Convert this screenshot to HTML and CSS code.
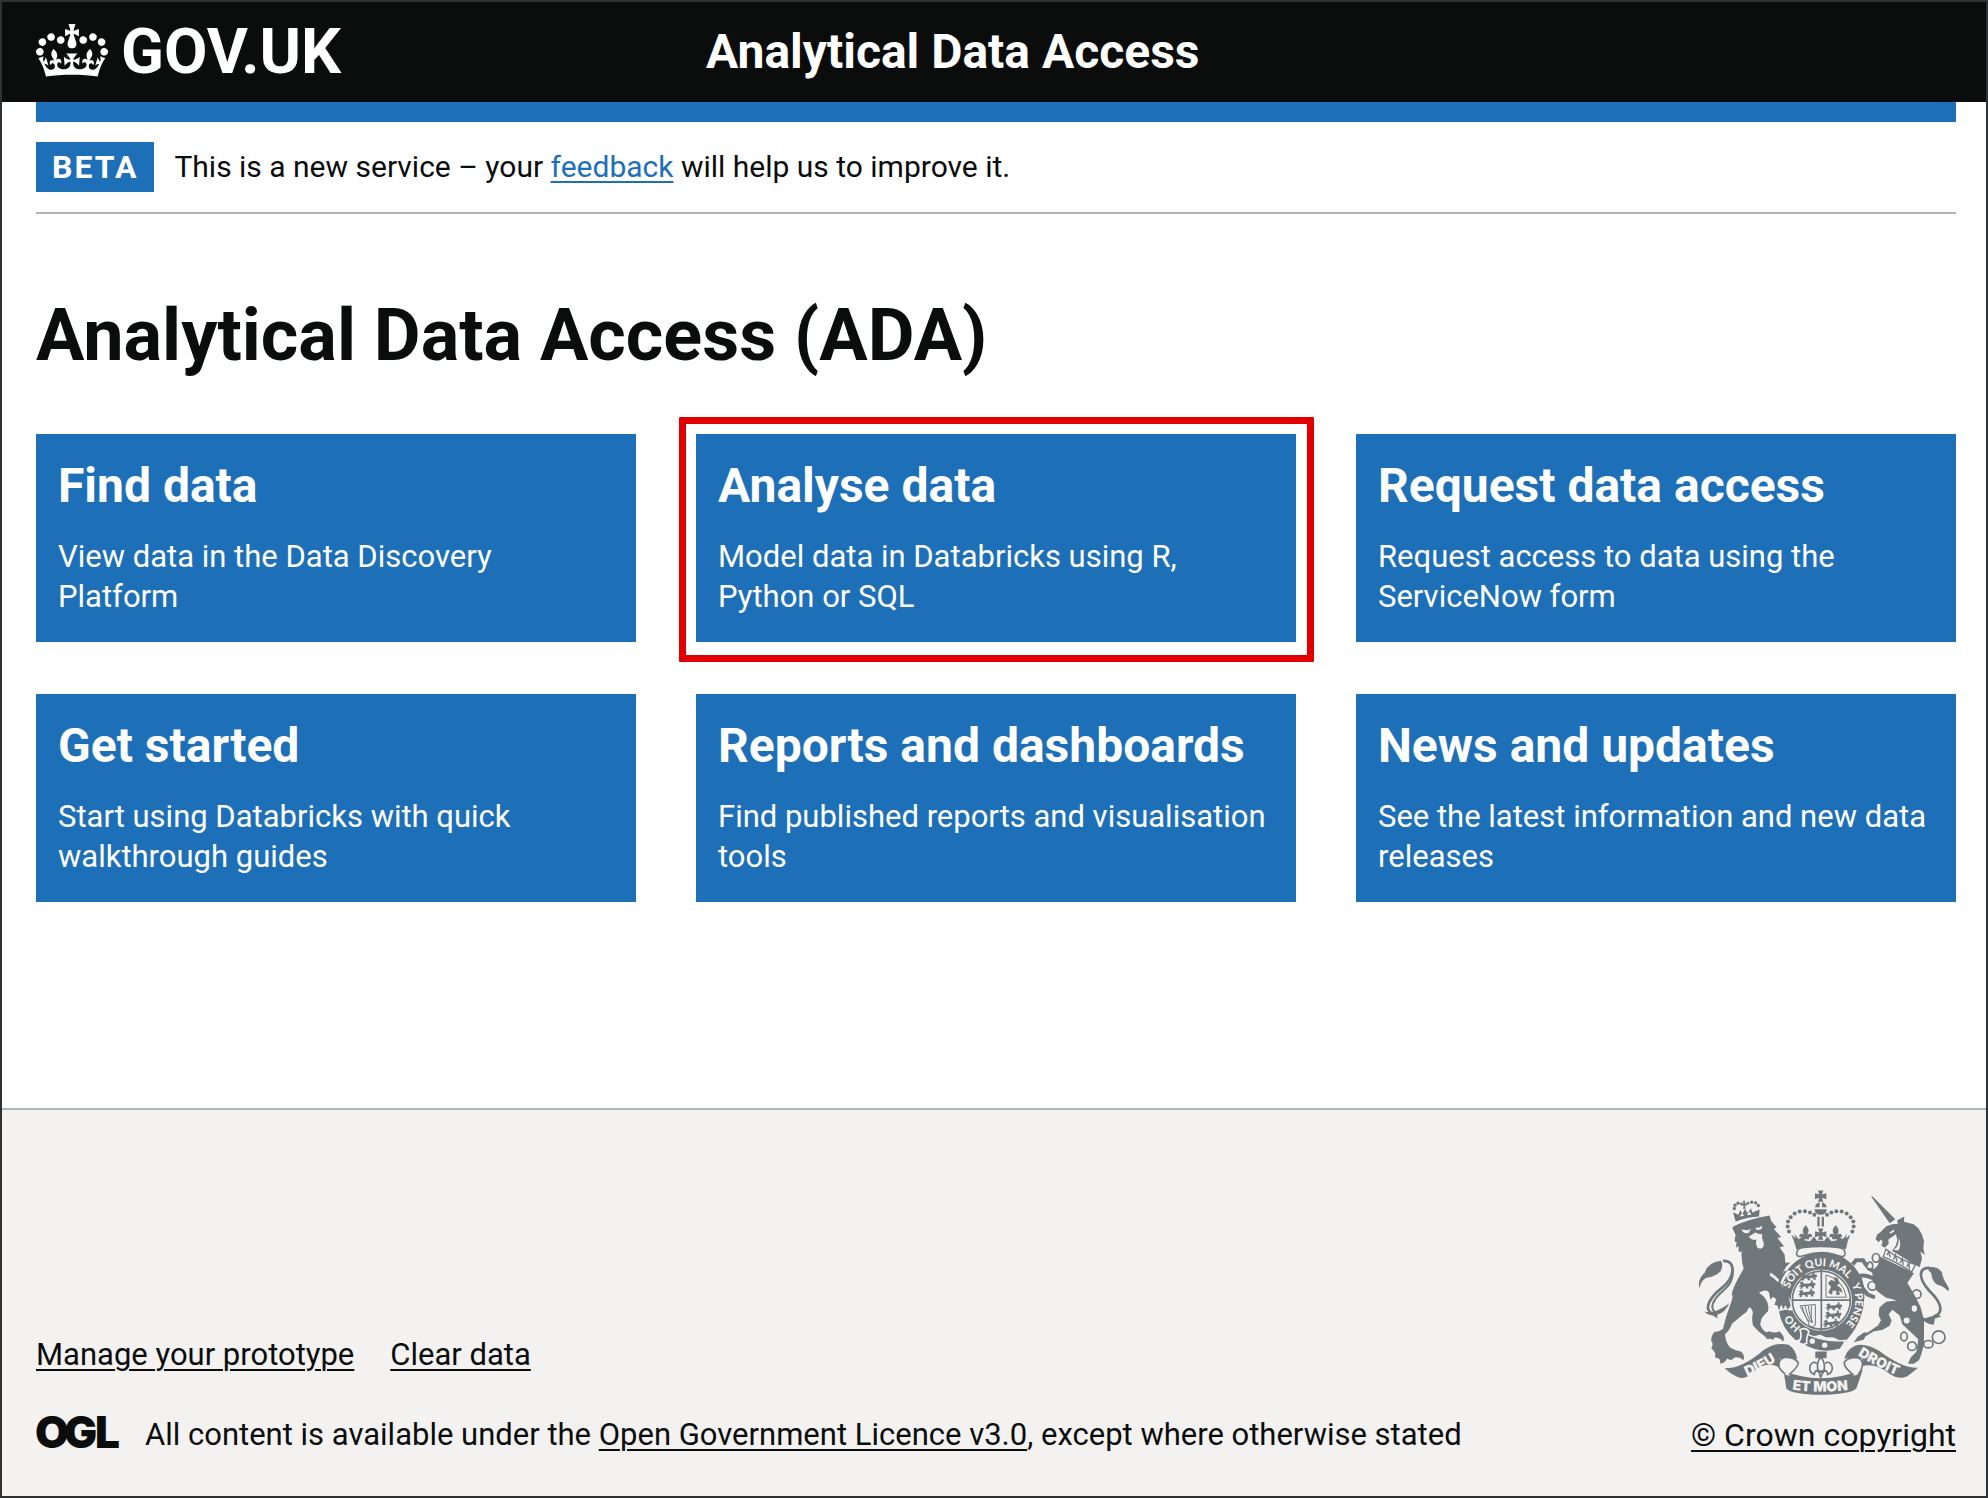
FILE: index.html
```html
<!DOCTYPE html>
<html lang="en">
<head>
<meta charset="utf-8">
<meta name="viewport" content="width=device-width, initial-scale=1">
<title>Analytical Data Access</title>
<link rel="stylesheet" href="styles.css">
</head>
<body>
<header class="header">
  <a class="logo" href="#" aria-label="GOV.UK">
    <svg class="logo-crown" viewBox="0 0 132 97" aria-hidden="true"><path fill="currentColor" fill-rule="evenodd" d="M25 30.2c3.5 1.5 7.7-.2 9.1-3.7 1.5-3.6-.2-7.8-3.9-9.2-3.6-1.4-7.6.3-9.1 3.9-1.4 3.5.3 7.5 3.9 9zM9 39.5c3.6 1.5 7.8-.2 9.2-3.7 1.5-3.6-.2-7.8-3.9-9.1-3.6-1.5-7.6.2-9.1 3.8-1.4 3.5.3 7.5 3.8 9zM4.4 57.2c3.5 1.5 7.7-.2 9.1-3.8 1.5-3.6-.2-7.7-3.9-9.1-3.5-1.5-7.6.3-9.1 3.8-1.4 3.5.3 7.6 3.9 9.1zm38.3-21.4c3.5 1.5 7.7-.2 9.1-3.8 1.5-3.6-.2-7.7-3.9-9.1-3.6-1.5-7.6.3-9.1 3.8-1.3 3.6.4 7.7 3.9 9.1zm64.4-5.6c-3.6 1.5-7.8-.2-9.1-3.7-1.5-3.6.2-7.8 3.8-9.2 3.6-1.4 7.7.3 9.2 3.9 1.3 3.5-.4 7.5-3.9 9zm15.9 9.3c-3.6 1.5-7.7-.2-9.1-3.7-1.5-3.6.2-7.8 3.7-9.1 3.6-1.5 7.7.2 9.2 3.8 1.5 3.5-.3 7.5-3.8 9zm4.7 17.7c-3.6 1.5-7.8-.2-9.2-3.8-1.5-3.6.2-7.7 3.9-9.1 3.6-1.5 7.7.3 9.2 3.8 1.3 3.5-.4 7.6-3.9 9.1zM89.3 35.8c-3.6 1.5-7.8-.2-9.2-3.8-1.4-3.6.2-7.7 3.9-9.1 3.6-1.5 7.7.3 9.2 3.8 1.4 3.6-.3 7.7-3.9 9.1zM69.7 17.7l8.9 4.7V9.3l-8.9 2.8c-.2-.3-.5-.6-.9-.9L72.4 0H59.6l3.5 11.2c-.3.3-.6.5-.9.9l-8.8-2.8v13.1l8.8-4.7c.3.3.6.7.9.9l-5 15.4v.1c-.2.8-.4 1.6-.4 2.4 0 4.1 3.1 7.5 7 8.1h.2c.3 0 .7.1 1 .1.4 0 .7 0 1-.1h.2c4-.6 7.1-4.1 7.1-8.1 0-.8-.1-1.7-.4-2.4V34l-5.1-15.4c.4-.2.7-.6 1-.9zM66 92.8c16.9 0 32.8 1.1 47.1 3.2 4-16.9 8.9-26.7 14-33.5l-9.6-3.4c1 4.9 1.1 7.2 0 10.2-1.5-1.4-3-4.3-4.2-8.7L108.6 76c2.8-2 5-3.2 7.5-3.3-4.4 9.4-10 11.9-13.6 11.2-4.3-.8-6.3-4.6-5.6-7.9 1-4.7 5.7-5.9 8-.5 4.3-8.7-3-11.4-7.6-8.8 7.1-7.2 7.9-13.5 2.1-21.1-8 6.1-8.1 12.3-4.5 20.8-4.7-5.4-12.1-2.5-9.5 6.2 3.4-5.2 7.9-2 7.2 3.1-.6 4.3-6.4 7.8-13.5 7.2-10.3-.9-10.9-8-11.2-13.8 2.5-.5 7.1 1.8 11 7.3L80.2 60c-4.1 4.4-8 5.3-12.3 5.4 1.4-4.4 8-11.6 8-11.6H55.5s6.4 7.2 7.9 11.6c-4.2-.1-8-1-12.3-5.4l1.4 16.4c3.9-5.5 8.5-7.7 10.9-7.3-.3 5.8-.9 12.8-11.1 13.8-7.2.6-12.9-2.9-13.5-7.2-.7-5 3.8-8.3 7.1-3.1 2.7-8.7-4.6-11.6-9.4-6.2 3.7-8.5 3.6-14.7-4.6-20.8-5.8 7.6-5 13.9 2.2 21.1-4.7-2.6-11.9.1-7.7 8.8 2.3-5.5 7.1-4.2 8.1.5.7 3.3-1.3 7.1-5.7 7.9-3.5.7-9-1.8-13.5-11.2 2.5.1 4.7 1.3 7.5 3.3l-4.7-15.4c-1.2 4.4-2.7 7.2-4.3 8.7-1.1-3-.9-5.3 0-10.2l-9.5 3.4c5 6.9 9.9 16.7 14 33.5 14.8-2.1 30.8-3.2 47.7-3.2z"/></svg>
    <span class="logo-text">GOV.UK</span>
  </a>
  <a class="service-name" href="#">Analytical Data Access</a>
</header>

<div class="container">
  <div class="brand-bar"></div>
  <div class="phase-banner">
    <strong class="tag">BETA</strong>
    <p class="phase-text">This is a new service – your <a class="link" href="#">feedback</a> will help us to improve it.</p>
  </div>
  <main class="main">
    <h1 class="title">Analytical Data Access (ADA)</h1>
    <div class="cards">
      <a class="card" href="#"><h2 class="card-title">Find data</h2><p class="card-text">View data in the Data Discovery Platform</p></a>
      <a class="card card-highlighted" href="#"><h2 class="card-title">Analyse data</h2><p class="card-text">Model data in Databricks using R, Python or SQL</p></a>
      <a class="card" href="#"><h2 class="card-title">Request data access</h2><p class="card-text">Request access to data using the ServiceNow form</p></a>
      <a class="card" href="#"><h2 class="card-title">Get started</h2><p class="card-text">Start using Databricks with quick walkthrough guides</p></a>
      <a class="card" href="#"><h2 class="card-title">Reports and dashboards</h2><p class="card-text">Find published reports and visualisation tools</p></a>
      <a class="card" href="#"><h2 class="card-title">News and updates</h2><p class="card-text">See the latest information and new data releases</p></a>
    </div>
  </main>
</div>

<footer class="footer">
  <div class="footer-meta">
    <nav class="footer-links">
      <a href="#">Manage your prototype</a>
      <a href="#">Clear data</a>
    </nav>
    <div class="licence">
      <svg class="ogl" viewBox="0 0 82 34" role="img" aria-label="OGL"><text class="ogl-text" x="-1 28 59" y="33">OGL</text></svg>
      <p class="licence-text">All content is available under the <a href="#">Open Government Licence v3.0</a>, except where otherwise stated</p>
    </div>
  </div>
  <a class="copyright" href="#">
    <svg class="crest" viewBox="60 58 750 614" aria-hidden="true">
      <defs>
        <path id="garter" d="M331 354A102 102 0 0 1 522 350"/>
        <path id="garter-right" d="M518 342A102 102 0 0 1 470 480"/>
        <path id="garter-left" d="M366 469A102 102 0 0 1 325 388"/>
        <path id="motto-left" d="M205 617Q257 595 310 558"/>
        <path id="motto-right" d="M536 553Q590 587 668 620"/>
        <path id="motto-mid" d="M340 657Q427 668 522 656"/>
        <path id="patee" d="M-8 -17H8L4 -5 17 -9V9L4 5 8 17H-8L-4 5-17 9V-9L-4-5Z"/>
        <path id="fleur" d="M0-22C12-10 10-2 4 8 12 0 22 4 18 16 14 9 10 14 10 20H-10C-10 14-14 9-18 16-22 4-12 0-4 8-10-2-12-10 0-22Z"/>
        <path id="beast" d="M-27 5L-20-3-25-7-15-11-11-4 4-5 11-9 9-14 15-14 16-6 21-8 24-1 18 3 20 9 13 9 11 3 1 4 3 10-4 10-7 4-14 5-17 11-23 11-20 5Z"/>
      </defs>

      <!-- lion -->
      <g class="ink">
        <path d="M160 172 164 166Q215 143 272 134L276 150 293 170 284 174 307 199 295 201 315 226 302 229 317 252 319 276 334 275Q318 288 312 306L304 332 327 369 335 405 326 417 319 402 314 415 306 401 300 420 296 405 286 402 292 386 283 378 274 386 270 365Q262 352 240 366 274 388 267 421 243 440 244 463 258 491 270 481 290 489 301 481 321 499 312 512 303 499 285 500 287 510 272 503 264 509 258 497 237 483 222 464 217 442 222 424 212 397 204 422 177 443 159 459 151 481 138 490 140 514 153 530 172 541 187 543 199 556 193 568 182 556 166 560 157 573 145 563 134 580 123 578 127 562 108 560 112 543 97 533 105 518 96 508 98 490 108 482 118 485 132 474 140 438 152 407 165 374 158 370 163 345 194 294 186 269 188 240 177 253 179 225 168 239 173 213 163 218 170 192Z"/>
        <path d="M61 352Q55 325 77 306 88 274 125 270 135 280 125 301 109 317 83 321 66 328 61 352ZM76 422Q104 432 151 397 139 424 115 432L115 443 102 434Q85 432 76 422Z"/>
        <path d="M170 152 162 124 178 132 184 117 190 130 198 114 206 127 216 112 220 125 242 116 240 137Q205 138 170 152Z"/>
        <circle cx="166" cy="113" r="5"/><circle cx="168" cy="103" r="5"/><circle cx="177" cy="97" r="5"/><circle cx="187" cy="99" r="4"/><circle cx="207" cy="97" r="4"/><circle cx="218" cy="94" r="5"/><circle cx="230" cy="96" r="5"/><circle cx="238" cy="104" r="5"/>
        <path d="M191 90H199L197 98 204 97V105L198 103 200 114H192L194 104 187 105V97L194 98Z"/>
      </g>
      <g class="line">
        <path stroke-width="8" d="M104 430C65 415 101 373 128 352 170 318 172 268 132 270"/>
        <path stroke-width="6" d="M114 429C84 411 108 380 134 358 158 339 167 310 158 288"/>
      </g>
      <g class="paper">
        <path d="M187 176 207 178 216 173 208 187Q194 190 187 176ZM229 171 241 170 250 164 247 175 234 178ZM209 198Q220 190 229 185 239 191 250 190L249 202Q257 218 253 228 247 237 235 231 229 219 232 206 220 211 209 198Z"/>
        <path d="M275 305Q304 324 331 364L326 367Q299 331 272 313ZM182 137 189 127 196 135ZM203 133 211 123 218 131Z"/>
      </g>

      <!-- crown -->
      <g class="ink">
        <use href="#patee" x="425" y="76"/>
        <path d="M408 109A18 18 0 0 1 422 94V109ZM429 94A18 18 0 0 1 443 109H429ZM406 115H444Q441 132 425 132 409 132 406 115ZM415 138H422V167H415ZM428 138H435V167H428Z"/>
        <use href="#patee" x="425" y="190"/>
        <use href="#fleur" x="380" y="185"/><use href="#fleur" x="470" y="185"/>
        <path d="M337 191 350 203 346 189 359 205 370 197 378 209 393 211 405 197 414 210H436L445 197 457 211 472 209 480 197 491 205 504 189 500 203 514 191Q504 213 501 235 425 214 352 235 346 211 337 191Z"/>
        <circle cx="406" cy="132" r="6"/><circle cx="393" cy="125" r="6"/><circle cx="378" cy="121" r="6"/><circle cx="362" cy="122" r="6"/><circle cx="347" cy="128" r="6"/><circle cx="335" cy="139" r="6"/><circle cx="327" cy="152" r="6"/><circle cx="326" cy="167" r="6"/><circle cx="330" cy="182" r="6"/>
        <circle cx="444" cy="132" r="6"/><circle cx="457" cy="125" r="6"/><circle cx="472" cy="121" r="6"/><circle cx="488" cy="122" r="6"/><circle cx="503" cy="128" r="6"/><circle cx="515" cy="139" r="6"/><circle cx="523" cy="152" r="6"/><circle cx="524" cy="167" r="6"/><circle cx="520" cy="182" r="6"/>
      </g>

      <!-- garter and shield -->
      <path class="ink" d="M318 300Q301 318 296 340L308 344Q318 318 338 300ZM427 243A128 128 0 0 1 555 390Q550 460 496 515L440 488 350 508Q307 470 300 421L319 417 340 420 335 388 304 335Q340 252 427 243Z"/>
      <circle class="paper" cx="427" cy="388" r="92"/>
      <circle class="line" cx="427" cy="388" r="87" stroke-width="5"/>
      <g class="line" stroke-width="5">
        <path d="M427 294V482M340 388H514"/>
        <path stroke-width="3" d="M441 312V379H502Q494 328 441 312ZM363 405 409 401V463Q390 477 388 453L363 405M370 407Q376 438 391 452M379 406Q384 437 397 455M388 405Q391 437 402 456M397 404V455"/>
      </g>
      <g class="ink">
        <use href="#beast" x="391" y="318"/><use href="#beast" x="386" y="343"/><use href="#beast" x="384" y="368"/>
        <use href="#beast" x="466" y="408"/><use href="#beast" x="464" y="433"/><use href="#beast" x="458" y="458"/>
        <path d="M448 366 456 348 447 338 456 327 468 332 463 320 475 320 482 337 474 343 486 352 491 366 479 360 483 371 472 373 472 360 461 360 459 372Z"/>
      </g>
      <path class="line" stroke-width="5" d="M353 250Q351 232 375 230 425 223 476 230 500 232 498 250 496 261 478 255 425 237 373 255 355 261 353 250Z"/>
      <g>
        <path class="ink crest-gap" d="M365 480Q426 515 500 509L484 535Q425 554 366 518Z"/>
        <path class="paper-line" stroke-width="5" d="M363 477Q382 468 390 483 382 497 383 517 367 526 359 513 371 500 363 477Z"/>
        <circle class="paper" cx="400" cy="511" r="8"/><circle class="paper" cx="437" cy="523" r="8"/>
        <path class="ink" d="M413 486H450L480 500 440 499Z"/>
      </g>

      <!-- unicorn -->
      <g class="ink">
        <path d="M576 76 580 76 649 145 632 157ZM657 159 654 149 676 137 675 153 704 160 718 172 729 191 735 211 733 232 737 252 724 242 729 262 722 289 702 278 639 240 650 225 655 208 651 190 628 206 629 219 618 231 607 225 611 212 605 206 599 214 590 205 594 192 604 184 622 166 640 160Z"/>
        <path d="M604 258 705 307 685 336 705 370 724 407 735 447 735 520 727 550 720 568 704 579 687 579 695 560 712 543 718 505 693 482 670 460 662 434 640 417 629 430 638 449 632 465 611 477 583 482 559 497 554 507 524 514 536 498 555 485 566 485 597 464 606 448 599 433 601 411 621 393 653 389 620 380 593 360 581 330 580 300 596 284Z"/>
        <path d="M750 289Q777 286 789 305 789 320 810 352L808 361Q792 345 774 341 758 330 757 307 744 298 750 289ZM713 427Q724 444 752 442L771 429 787 437 768 443 764 462Q738 461 713 427Z"/>
      </g>
      <g class="line">
        <path stroke-width="12" d="M596 307Q566 296 552 268L531 268 521 281M591 326Q559 310 541 315L549 350 566 371 588 380M532 313 523 337"/>
        <path stroke-width="8" d="M744 444C801 435 792 399 750 359 715 319 720 290 752 291"/>
        <path stroke-width="4" d="M621 235Q664 268 710 281L698 303Q651 272 613 258Z"/>
      </g>
      <path class="paper" d="M632 184 646 176 645 183 633 189ZM643 237 652 231Q661 216 659 200 669 222 658 239ZM620 241Q665 275 704 286L696 298Q651 270 618 254Z"/>
      <path class="line" stroke-width="4" d="M624 253 629 243 634 260M643 267 649 252 654 272M663 277 670 264 673 283M683 288 690 276 691 295"/>
      <g class="line" stroke-width="5">
        <ellipse cx="591" cy="261" rx="11" ry="13"/><ellipse cx="573" cy="286" rx="8" ry="12"/><circle cx="580" cy="345" r="13"/><circle cx="713" cy="370" r="13"/>
        <ellipse cx="675" cy="497" rx="10" ry="13"/><circle cx="699" cy="526" r="13"/><ellipse cx="748" cy="520" rx="14" ry="11"/><circle cx="779" cy="499" r="19"/>
      </g>
      <g class="paper"><ellipse cx="706" cy="413" rx="8" ry="10"/><circle cx="683" cy="449" r="9"/><circle cx="572" cy="286" r="6"/><circle cx="580" cy="345" r="9"/></g>

      <text class="crest-text crest-text-small"><textPath href="#garter">SOIT QUI MAL</textPath></text>
      <text class="crest-text crest-text-small"><textPath href="#garter-right">Y PENSE</textPath></text>
      <text class="crest-text crest-text-small"><textPath href="#garter-left">HO</textPath></text>

      <!-- motto ribbon -->
      <g class="ink">
        <path d="M137 592Q190 593 253 538 290 512 329 522 352 538 354 565 330 559 313 562 297 575 300 589 255 568 216 610 192 628 172 617 150 605 137 592Z"/>
        <path d="M717 591Q670 593 600 540 560 516 530 524 502 536 496 564 524 558 537 562 550 575 548 586 590 575 635 611 660 628 685 616 702 604 717 591Z"/>
        <path d="M313 600Q425 646 551 597 541 628 532 653 512 671 425 672 340 671 322 653 318 626 313 600Z"/>
        <path d="M409 542H443V562H409Z"/>
      </g>
      <path class="paper" d="M302 563Q353 560 357 578 354 600 330 615L316 611Q299 586 302 563ZM550 563Q502 560 496 578 498 599 524 615L539 610Q553 586 550 563Z"/>
      <path class="line" stroke-width="5" d="M330 612Q362 584 357 574 343 558 316 560 297 565 300 588 303 598 319 610M524 613Q493 589 496 574 509 558 537 561 553 568 550 586 548 600 537 611M347 623Q425 638 505 622"/>
      <g class="line" stroke-width="5"><path d="M425 558Q409 580 419 604H433Q443 580 425 558ZM417 597Q407 599 406 611 389 604 393 585 401 568 413 578M435 597Q445 599 446 611 463 604 459 585 451 568 439 578M412 601H440M420 603 425 620 432 603"/></g>
      <text class="crest-text crest-text-large"><textPath href="#motto-left">DIEU</textPath></text>
      <text class="crest-text crest-text-large"><textPath href="#motto-right">DROIT</textPath></text>
      <text class="crest-text crest-text-large"><textPath href="#motto-mid">ET MON</textPath></text>
    </svg>
    <span>© Crown copyright</span>
  </a>
</footer>
</body>
</html>
```
FILE: styles.css
```css
* { box-sizing: border-box; }

body {
  display: flex;
  flex-direction: column;
  min-height: 100vh;
  margin: 0;
  border: 2px solid #303132;
  background: #fff;
  color: #0b0c0c;
  font-family: Roboto, "Liberation Sans", sans-serif;
  font-size: 31px;
  line-height: 40px;
}

h1, h2, p { margin: 0; }

.header {
  display: grid;
  grid-template-columns: 670px 1fr;
  align-items: center;
  height: 100px;
  padding: 0 34px;
  background: #0b0c0c;
}

.header a { color: #fff; text-decoration: none; }
.logo { display: flex; align-items: center; gap: 13px; }
.logo-crown { width: 72px; height: 53px; margin-bottom: 4px; }
.logo-text { font-size: 63px; font-weight: 700; line-height: 60px; }
.service-name { font-size: 48px; font-weight: 700; line-height: 60px; }

.container { padding: 0 30px 0 34px; }
.brand-bar { height: 20px; background: #1d70b8; }

.phase-banner {
  display: flex;
  align-items: center;
  gap: 20px;
  padding: 20px 0;
  border-bottom: 2px solid #b1b4b6;
}

.tag {
  padding: 5px 16px;
  background: #1d70b8;
  color: #fff;
  font-size: 32px;
  letter-spacing: 2px;
}

.phase-text { font-size: 30px; }
.link { color: #1d70b8; }
a { text-decoration-thickness: 2px; text-underline-offset: 4px; }

.main { padding: 82px 0 206px; }
.title { margin-bottom: 58px; font-size: 72px; line-height: 80px; }

.cards {
  display: grid;
  grid-template-columns: repeat(3, 1fr);
  gap: 52px 60px;
}

.card {
  position: relative;
  padding: 22px 22px 25px;
  background: #1d70b8;
  color: #fff;
  text-decoration: none;
}

.card-title { margin-bottom: 21px; font-size: 48px; line-height: 60px; }

.card-highlighted::after {
  content: "";
  position: absolute;
  inset: -17px -18px -20px -17px;
  border: 7px solid #e00000;
  border-radius: 1px;
}

.footer {
  display: flex;
  flex: 1;
  justify-content: space-between;
  align-items: flex-end;
  padding: 78px 30px 41px 34px;
  border-top: 2px solid #b1b4b6;
  background: #f3f2f1;
}

.footer a { color: #0b0c0c; }
.footer-links { display: flex; gap: 36px; margin-bottom: 40px; }
.licence { display: flex; align-items: center; gap: 27px; }
.ogl { width: 82px; height: 34px; margin-bottom: 6px; overflow: visible; }
.ogl-text { fill: #0b0c0c; font-family: Inter, sans-serif; font-size: 44px; font-weight: 900; }

.copyright { display: flex; flex-direction: column; align-items: center; gap: 20px; font-size: 32px; }
.crest { width: 250px; height: 205px; }
.ink { fill: #6f777b; }
.paper { fill: #f3f2f1; }
.line { fill: none; stroke: #6f777b; }
.paper-line { fill: #6f777b; stroke: #f3f2f1; }
.crest-gap { stroke: #f3f2f1; stroke-width: 4px; }
.crest-text { fill: #f3f2f1; font-weight: 900; }
.crest-text-small { font-family: Lato, sans-serif; font-size: 32px; }
.crest-text-large { font-family: Inter, sans-serif; font-size: 42px; }
```
